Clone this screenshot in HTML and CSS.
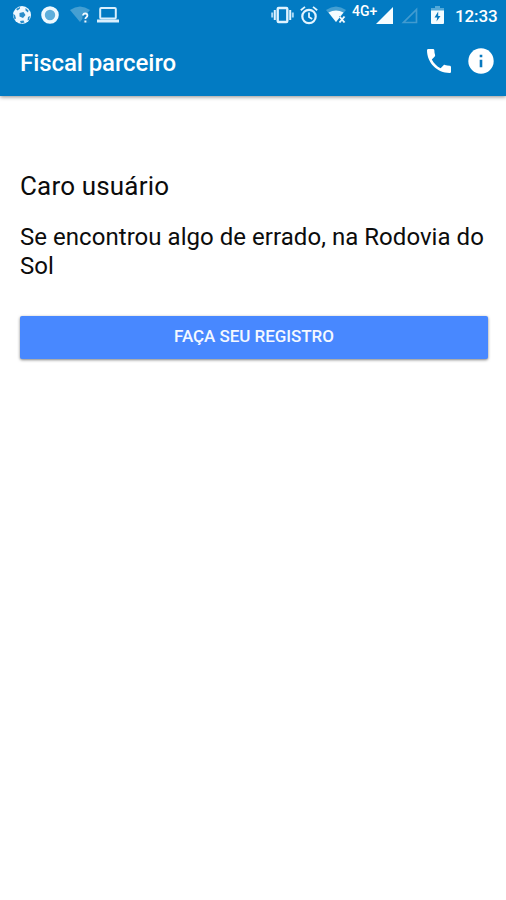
FILE: index.html
```html
<!DOCTYPE html>
<html lang="pt-BR">
<head>
<meta charset="utf-8">
<title>Fiscal parceiro</title>
<link rel="stylesheet" href="styles.css">
</head>
<body>
<header class="top">
  <div class="status">
    <svg class="ball" width="18" height="18" viewBox="0 0 18 18"><circle cx="9" cy="9" r="9" fill="#eef8ff"/><path d="M6.500 7l4-1 2 3-2.500 3-3.500-1.500zM3 3l4-2 0 1.500-2.500 2zM12.500 2l3 2.500-.5 2-2.500-2zM0 8l2 1 1 3.500-1.500 1zM7 15l3.500-.5 1 2-3.500 1zM15 11l2-1-1 4-1.500 .5z" fill="#2a8dca"/></svg>
    <svg class="ring" width="18" height="18" viewBox="0 0 18 18"><circle cx="9" cy="9" r="7" fill="#5eaedb" stroke="#eef9ff" stroke-width="3.600"/></svg>
    <svg class="wifi-q" width="21" height="18" viewBox="0 0 21 18"><path d="M0 4Q10-3 20 4L10 16z" fill="#459fd2"/><path d="M12.500 7h7v10h-7z" fill="#127fc3"/><path d="M13 9.500q0-2 2.200-2t2.200 2q0 1-1.200 1.900-.8.600-.8 1.600" fill="none" stroke="#f1faff" stroke-width="1.800"/><path d="M14.400 14.500h2v2h-2z" fill="#f1faff"/></svg>
    <svg class="laptop" width="22" height="16" viewBox="0 0 22 16"><rect x="3.200" y="1" width="15.600" height="10.600" rx="1" fill="none" stroke="#d9effd" stroke-width="2"/><path d="M0 12.500h22v3H0z" fill="#d9effd"/></svg>
    <svg class="vibrate" width="23" height="18" viewBox="0 0 23 18"><rect x="6.700" y="2" width="9.600" height="14" rx="1" fill="none" stroke="#dff3ff" stroke-width="2.400"/><path d="M3.800 4v10M19.200 4v10" stroke="#dff3ff" stroke-width="2"/><path d="M1.200 6.500v5M21.800 6.500v5" stroke="#a8d8f5" stroke-width="2"/></svg>
    <svg class="alarm" width="18" height="19" viewBox="0 0 18 19"><circle cx="9" cy="10.500" r="6.700" fill="none" stroke="#e2f4ff" stroke-width="2.200"/><path d="M.8 4.300L5 .9M17.200 4.300L13 .9M9 6.500V11l3.200 2" fill="none" stroke="#e2f4ff" stroke-width="1.800"/></svg>
    <svg class="wifi-x" width="21" height="18" viewBox="0 0 21 18"><path d="M0 4Q10-3 20 4L10 16z" fill="#449fd2"/><path d="M2.500 6.500Q10 2.500 17.500 6.500L10 16z" fill="#f4fcff"/><path d="M13 10H20v7h-7z" fill="#0d7bc0"/><path d="M13.500 10.500l5 6m0-6l-5 6" stroke="#f4fcff" stroke-width="1.900"/></svg>
    <span class="network">4G+</span>
    <svg class="signal" width="17" height="17" viewBox="0 0 17 17"><path d="M17 0v17H0z" fill="#f6fdff"/></svg>
    <svg class="signal-empty" width="17" height="17" viewBox="0 0 17 17"><path d="M15.500 2.500v13h-13z" fill="none" stroke="#419bd0" stroke-width="1.700"/></svg>
    <svg class="battery" width="13" height="18" viewBox="0 0 13 18"><path d="M4 0h5v2h4v3H0V2h4z" fill="#53a9d8"/><path d="M0 4.500h13V17q0 1-1 1H1q-1 0-1-1z" fill="#f4fcff"/><path d="M7.200 5.500L3.500 11.500h2.700L5.500 15.500 9.500 10H7.200z" fill="#0879bf"/></svg>
    <span class="clock">12:33</span>
  </div>
  <div class="toolbar">
    <h1 class="title">Fiscal parceiro</h1>
    <svg class="phone" width="24" height="24" viewBox="3 3 18 18"><path d="M6.620 10.790c1.440 2.830 3.760 5.140 6.590 6.590l2.200-2.200c.27-.27.67-.36 1.020-.24 1.120.37 2.330.57 3.570.57.55 0 1 .45 1 1V20c0 .55-.45 1-1 1C10.610 21 3 13.390 3 4c0-.55.45-1 1-1h3.500c.55 0 1 .45 1 1 0 1.250.2 2.450.57 3.570.11.35.03.74-.25 1.020l-2.200 2.200z" fill="#fff"/></svg>
    <svg class="info" width="26" height="26" viewBox="0 0 26 26"><circle cx="13" cy="13" r="12.700" fill="#fff"/><path d="M11.700 6.700h2.600v2.600h-2.600zM11.700 11.800h2.600v7.500h-2.600z" fill="#0879bf"/></svg>
  </div>
</header>
<main class="content">
  <h2 class="greeting">Caro usuário</h2>
  <p class="message">Se encontrou algo de errado, na Rodovia do Sol</p>
  <button class="register" type="button">FAÇA SEU REGISTRO</button>
</main>
</body>
</html>
```

FILE: styles.css
```css
* { box-sizing: border-box; }
body {
  margin: 0;
  min-height: 900px;
  background: #fff;
  color: #0c0c0c;
  font-family: Roboto, sans-serif;
}
.top {
  height: 96px;
  background: #027bc3;
  color: #fff;
  box-shadow: 0 1px 4px rgba(0, 0, 0, .45);
}
.status {
  display: flex;
  align-items: center;
  height: 30px;
  padding-left: 13px;
}
svg { display: block; flex: none; }
.ring { margin-left: 10px; }
.wifi-q { margin-left: 11px; }
.laptop { margin-left: 6px; }
.vibrate { margin-left: 152px; }
.alarm { margin-left: 6px; }
.wifi-x { margin-left: 8px; }
.network {
  width: 26px;
  margin: -9px 0 0 5px;
  font-size: 14px;
  line-height: 16px;
  font-weight: 500;
  white-space: nowrap;
}
.signal { margin-left: -2px; }
.signal-empty { margin-left: 8px; }
.battery { margin-left: 13px; }
.clock {
  margin: 1px 0 0 11px;
  font-size: 17px;
  letter-spacing: -.1px;
  font-weight: 500;
  white-space: nowrap;
}
.toolbar {
  display: flex;
  align-items: center;
  height: 63px;
  padding: 0 12px 0 20px;
}
.title {
  flex: 1;
  margin: 3px 0 0;
  font-size: 24px;
  line-height: 28px;
  font-weight: 500;
  letter-spacing: -.08px;
}
.phone { margin-top: -1px; }
.info { margin: -1px 0 0 17px; }
.content { padding: 75px 18px 0 20px; }
.greeting {
  margin: 0;
  font-size: 26px;
  line-height: 30px;
  font-weight: 400;
  letter-spacing: .17px;
}
.message {
  margin: 22px 0 0;
  font-size: 24px;
  line-height: 29px;
  letter-spacing: .04px;
}
.register {
  display: block;
  width: 100%;
  height: 43px;
  margin-top: 35px;
  padding: 0 0 2px;
  border: 0;
  border-radius: 2px;
  background: #4888ff;
  color: #f4f8ff;
  font: 500 17px/41px Roboto, sans-serif;
  letter-spacing: -.05px;
  box-shadow: 0 1px 3px rgba(0, 0, 0, .5);
}
```
